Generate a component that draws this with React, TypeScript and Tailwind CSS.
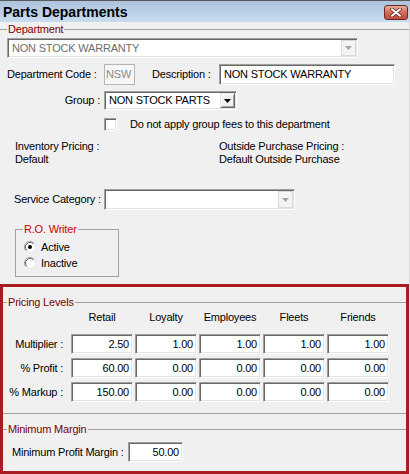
import React from 'react';

// classic 3D borders
const sunken =
    'border border-t-[#a0a0a0] border-l-[#a0a0a0] border-b-white border-r-white shadow-[inset_1px_1px_0_#696969,inset_-1px_-1px_0_#e3e3e3]';
const raised =
    'border border-t-[#e3e3e3] border-l-[#e3e3e3] border-b-[#696969] border-r-[#696969] shadow-[inset_1px_1px_0_#fff,inset_-1px_-1px_0_#a0a0a0] bg-[#f0f0f0]';

const levels = ['Retail', 'Loyalty', 'Employees', 'Fleets', 'Friends'];

const pricingRows: { label: string; values: string[] }[] = [
    { label: 'Multiplier :', values: ['2.50', '1.00', '1.00', '1.00', '1.00'] },
    { label: '% Profit :', values: ['60.00', '0.00', '0.00', '0.00', '0.00'] },
    { label: '% Markup :', values: ['150.00', '0.00', '0.00', '0.00', '0.00'] }
];

const DropArrow: React.FC<{ disabled?: boolean }> = ({ disabled }) => (
    <div
        className={`w-[15px] h-full flex items-center justify-center ${
            disabled ? 'border border-[#d9d9d9] bg-[#f4f4f4]' : raised
        }`}
    >
        <svg width="7" height="4" viewBox="0 0 7 4">
            <path d="M0 0h7L3.5 4z" fill={disabled ? '#a3a3a3' : '#000'} />
        </svg>
    </div>
);

const Combo: React.FC<{ text?: string; className: string; disabled?: boolean; muted?: boolean }> = ({
    text,
    className,
    disabled,
    muted
}) => (
    <div className={`${sunken} bg-white flex p-[1px] ${className}`}>
        <div className={`flex-1 flex items-center pl-[3px] ${muted ? 'text-[#6d6d6d]' : 'text-black'}`}>{text}</div>
        <DropArrow disabled={disabled} />
    </div>
);

const GroupHeader: React.FC<{ label: string; lead: string; color: string }> = ({ label, lead, color }) => (
    <div className="flex items-center h-[14px]">
        <div className={`h-0 border-t border-[#a0a0a0] ${lead}`} />
        <span className={`px-[1px] leading-[14px] ${color}`}>{label}</span>
        <div className="flex-1 h-0 border-t border-[#a0a0a0]" />
    </div>
);

const Radio: React.FC<{ checked?: boolean }> = ({ checked }) => (
    <svg width="12" height="12" viewBox="0 0 12 12">
        <circle cx="6" cy="6" r="5.5" fill="#fff" stroke="#e3e3e3" />
        <path d="M2.11 9.89A5.5 5.5 0 0 1 9.89 2.11" fill="none" stroke="#a0a0a0" />
        <path d="M2.82 9.18A4.5 4.5 0 0 1 9.18 2.82" fill="none" stroke="#696969" />
        {checked && <circle cx="6" cy="6" r="2" fill="#000" />}
    </svg>
);

const NumBox: React.FC<{ value: string; className?: string }> = ({ value, className = '' }) => (
    <div className={`${sunken} bg-white h-[20px] flex items-center justify-end pr-[3px] ${className}`}>{value}</div>
);

const App: React.FC = () => {
    return (
        <div className="w-[410px] h-[474px] overflow-hidden flex flex-col bg-[#f0f0f0] text-[11px] tracking-[-0.2px] text-black font-['Liberation_Sans',Arial,sans-serif]">
            {/* title bar */}
            <div className="h-[22px] shrink-0 flex items-start border-t border-[#5a5a5a] bg-gradient-to-b from-[#adc4dd] to-[#c9dbee]">
                <span className="pl-[3px] pt-[3px] text-[14px] leading-[16px] font-bold tracking-normal">Parts Departments</span>
                <div className="ml-auto mr-[2px] mt-[4px] w-[24px] h-[15px] rounded-[3px] border border-[#6b2b24] bg-gradient-to-b from-[#e6a99b] via-[#d46b5c] to-[#c24a3b] flex items-center justify-center">
                    <svg width="12" height="9" viewBox="0 0 12 9">
                        <path d="M2 1.2l8 6.6M10 1.2l-8 6.6" stroke="#5a2a24" strokeWidth="3.4" strokeLinecap="round" />
                        <path d="M2 1.2l8 6.6M10 1.2l-8 6.6" stroke="#fff" strokeWidth="1.9" strokeLinecap="round" />
                    </svg>
                </div>
            </div>

            <div className="flex-1 flex flex-col border-r border-[#dadada]">
                <GroupHeader label="Department" lead="w-[7px]" color="text-[#800000]" />

                <Combo text="NON STOCK WARRANTY" className="mt-[2px] ml-[7px] w-[351px] h-[20px]" disabled muted />

                <div className="mt-[6px] h-[21px] flex items-center">
                    <span className="ml-[7px] w-[97px]">Department Code :</span>
                    <div className="w-[31px] h-full border border-[#b5b5b5] bg-[#f7f7f7] flex items-center pl-[1px] text-[#8a8a8a]">NSW</div>
                    <span className="ml-[17px] w-[67px]">Description :</span>
                    <div className={`${sunken} bg-white w-[176px] h-full flex items-center pl-[4px]`}>NON STOCK WARRANTY</div>
                </div>

                <div className="mt-[6px] h-[19px] flex items-center">
                    <span className="w-[104px] pr-[4px] text-right">Group :</span>
                    <Combo text="NON STOCK PARTS" className="w-[133px] h-full" />
                </div>

                <label className="mt-[8px] h-[13px] ml-[104px] flex items-center">
                    <div className={`${sunken} bg-white w-[13px] h-[13px]`} />
                    <span className="ml-[13px]">Do not apply group fees to this department</span>
                </label>

                <div className="mt-[9px] flex leading-[13px] pl-[15px]">
                    <div className="w-[204px]">
                        <div>Inventory Pricing :</div>
                        <div>Default</div>
                    </div>
                    <div>
                        <div>Outside Purchase Pricing :</div>
                        <div>Default Outside Purchase</div>
                    </div>
                </div>

                <div className="mt-[23px] h-[21px] flex items-center">
                    <span className="ml-[14px] w-[90px]">Service Category :</span>
                    <Combo className="w-[191px] h-full" disabled />
                </div>

                <fieldset className="mt-[12px] ml-[15px] w-[104px] border border-[#a0a0a0] pl-[8px] pb-[5px]">
                    <legend className="ml-[-1px] px-[1px] leading-[14px] text-[#cc0000]">R.O. Writer</legend>
                    <div className="mt-[3px] h-[16px] flex items-center gap-[5px]">
                        <Radio checked />
                        <span>Active</span>
                    </div>
                    <div className="h-[16px] flex items-center gap-[5px]">
                        <Radio />
                        <span>Inactive</span>
                    </div>
                </fieldset>

                {/* highlighted pricing area */}
                <div className="mt-[7px] w-[409px] h-[190px] border-[3px] border-[#a81c22] flex flex-col">
                    <div className="mt-[8px]">
                        <GroupHeader label="Pricing Levels" lead="w-[4px]" color="text-[#800000]" />
                    </div>

                    <div className="mt-[1px] h-[14px] flex items-center">
                        <div className="w-[68px]" />
                        <div className="flex gap-[2px]">
                            {levels.map((l) => (
                                <div key={l} className="w-[62px] text-center">
                                    {l}
                                </div>
                            ))}
                        </div>
                    </div>

                    <div className="mt-[10px] flex flex-col gap-[4px]">
                        {pricingRows.map((row) => (
                            <div key={row.label} className="flex items-center">
                                <span className="w-[68px] pr-[8px] text-right">{row.label}</span>
                                <div className="flex gap-[2px]">
                                    {row.values.map((v, i) => (
                                        <NumBox key={i} value={v} className="w-[62px]" />
                                    ))}
                                </div>
                            </div>
                        ))}
                    </div>

                    <div className="mt-[11px] h-0 border-t border-[#a0a0a0]" />

                    <div className="mt-[8px]">
                        <GroupHeader label="Minimum Margin" lead="w-[4px]" color="text-[#800000]" />
                    </div>

                    <div className="mt-[6px] flex items-center">
                        <span className="ml-[9px] w-[116px]">Minimum Profit Margin :</span>
                        <NumBox value="50.00" className="w-[55px]" />
                    </div>
                </div>
            </div>
        </div>
    );
};

export default App;
